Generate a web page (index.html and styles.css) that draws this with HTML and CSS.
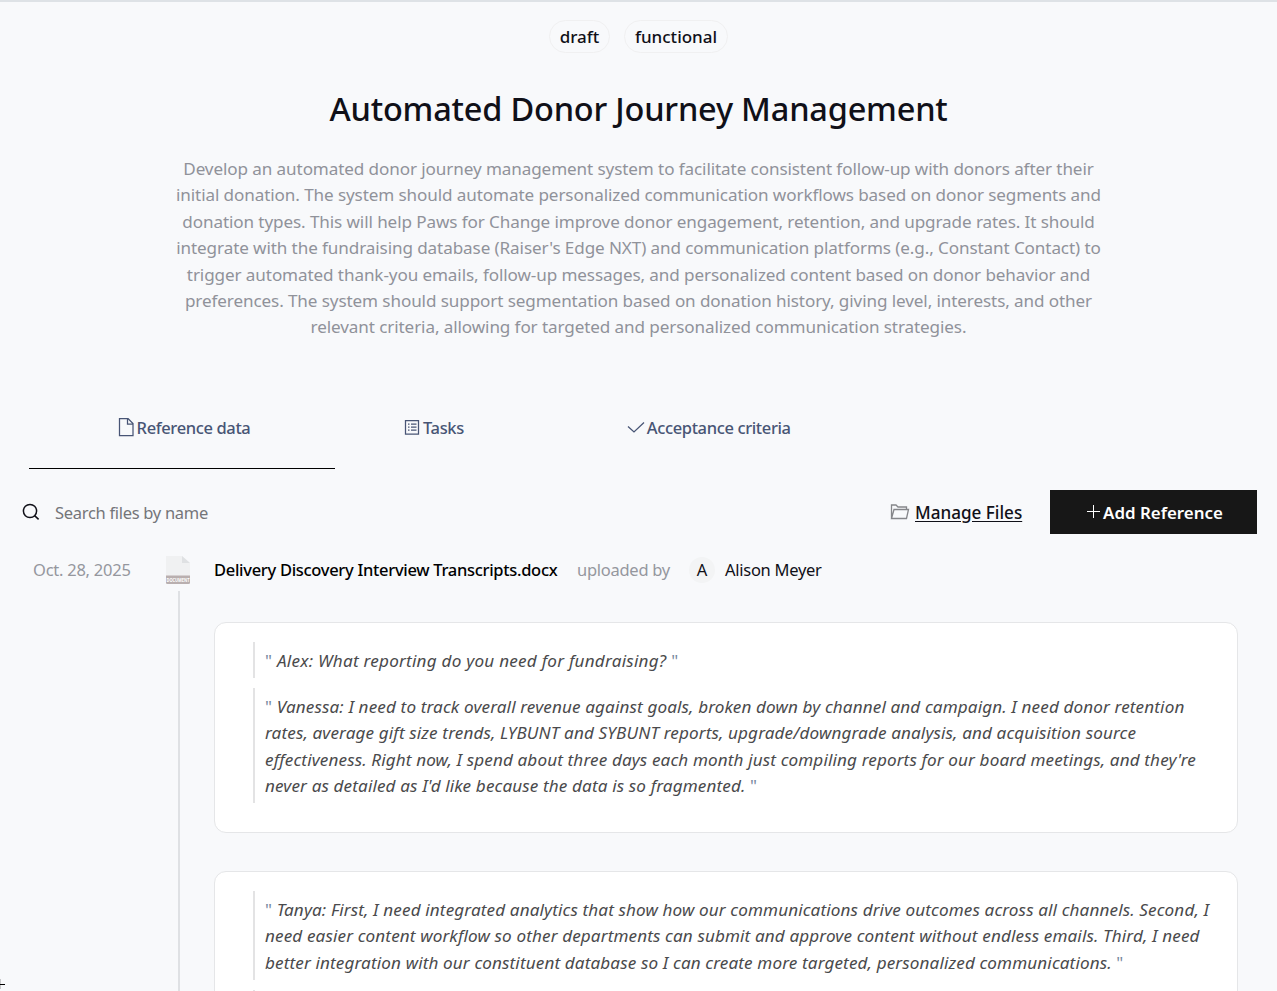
FILE: index.html
```html
<!DOCTYPE html>
<html lang="en">
<head>
<meta charset="utf-8">
<title>Automated Donor Journey Management</title>
<link rel="stylesheet" href="styles.css">
</head>
<body>
<main class="page">
  <header class="hero">
    <div class="tags"><span class="tag tag-draft">draft</span><span class="tag tag-functional">functional</span></div>
    <h1 class="title"><span>Automated Donor Journey Management</span></h1>
    <p class="summary">
      <span class="line">Develop an automated donor journey management system to facilitate consistent follow-up with donors after their</span>
      <span class="line">initial donation. The system should automate personalized communication workflows based on donor segments and</span>
      <span class="line">donation types. This will help Paws for Change improve donor engagement, retention, and upgrade rates. It should</span>
      <span class="line">integrate with the fundraising database (Raiser's Edge NXT) and communication platforms (e.g., Constant Contact) to</span>
      <span class="line">trigger automated thank-you emails, follow-up messages, and personalized content based on donor behavior and</span>
      <span class="line">preferences. The system should support segmentation based on donation history, giving level, interests, and other</span>
      <span class="line">relevant criteria, allowing for targeted and personalized communication strategies.</span>
    </p>
  </header>
  <nav class="tabs">
    <a class="tab tab-active"><svg class="icon-doc" width="16" height="20" viewBox="0 0 16 20"><path d="M1.500 .5h8.500l5 5v12H1.500zM9.500 .5v5.500h5.500" /></svg><span>Reference data</span></a>
    <a class="tab"><svg class="icon-list" width="16" height="18" viewBox="0 0 16 18"><path d="M1.500 1.500h13v13.500h-13zM4 5h1.500M7 5h5.500M4 8h1.500M7 8h5.500M4 11h1.500M7 11h5.500"/></svg><span>Tasks</span></a>
    <a class="tab"><svg class="icon-check" width="18" height="18" viewBox="0 0 18 18"><path d="M1 7.500l6 5.500L17 3.500"/></svg><span>Acceptance criteria</span></a>
  </nav>
  <section class="toolbar">
    <svg class="icon-search" width="18" height="18" viewBox="0 0 18 18"><circle cx="8" cy="8" r="6.600"/><path d="M12.600 12.600l4 3.800"/></svg>
    <span class="placeholder">Search files by name</span>
    <svg class="icon-folder" width="20" height="18" viewBox="0 0 20 18"><path d="M1.500 15.500V2h4.500l2 2h8.500v2.500M1.500 15.500L4 6.500h14.500L16.500 15.500z"/></svg>
    <a class="manage">Manage Files</a>
    <button class="add"><svg width="15" height="15" viewBox="0 0 15 15"><path d="M7.500 1v13M1 7.500h13"/></svg><span>Add Reference</span></button>
  </section>
  <section class="entry">
    <span class="date">Oct. 28, 2025</span>
    <div class="rail">
      <svg class="file" width="24" height="30" viewBox="0 0 24 30"><path class="sheet" d="M0 0h16l8 7v21H0z"/><path class="fold" d="M16 0l8 7h-8z"/><path class="band" d="M0 19.500h24v7q0 1.500-1.500 1.500h-21Q0 28 0 26.500z"/><text x="12" y="25.500" text-anchor="middle" textLength="23" lengthAdjust="spacingAndGlyphs">DOCUMENT</text></svg>
      <div class="rail-line"></div>
    </div>
    <div class="content">
      <div class="meta"><span class="filename">Delivery Discovery Interview Transcripts.docx</span><span class="by">uploaded by</span><span class="avatar">A</span><span class="person">Alison Meyer</span></div>
      <article class="card">
        <blockquote class="quote quote-single"><span class="line"><b class="mark">"</b> Alex: What reporting do you need for fundraising? <b class="mark">"</b></span></blockquote>
        <blockquote class="quote">
          <span class="line"><b class="mark">"</b> Vanessa: I need to track overall revenue against goals, broken down by channel and campaign. I need donor retention</span>
          <span class="line">rates, average gift size trends, LYBUNT and SYBUNT reports, upgrade/downgrade analysis, and acquisition source</span>
          <span class="line">effectiveness. Right now, I spend about three days each month just compiling reports for our board meetings, and they're</span>
          <span class="line">never as detailed as I'd like because the data is so fragmented. <b class="mark">"</b></span>
        </blockquote>
      </article>
      <article class="card">
        <blockquote class="quote">
          <span class="line"><b class="mark">"</b> Tanya: First, I need integrated analytics that show how our communications drive outcomes across all channels. Second, I</span>
          <span class="line">need easier content workflow so other departments can submit and approve content without endless emails. Third, I need</span>
          <span class="line">better integration with our constituent database so I can create more targeted, personalized communications. <b class="mark">"</b></span>
        </blockquote>
        <blockquote class="quote"></blockquote>
      </article>
    </div>
  </section>
  <svg class="cursor" width="5" height="12" viewBox="0 0 5 12"><path class="cursor-stem" d="M.5 1v10"/><path d="M0 6.500h5"/></svg>
</main>
</body>
</html>
```
FILE: styles.css
```css
* { box-sizing: border-box; }
body { margin: 0; background: #f8f9fb; font: 16.5px/26.4px "Noto Sans", sans-serif; color: #101018; }
.page { position: relative; height: 991px; overflow: hidden; border-top: 2px solid #dee2e6; }
svg { display: block; flex: none; fill: none; stroke: currentColor; }
.line { display: block; white-space: nowrap; }
.hero { display: flex; flex-direction: column; align-items: center; padding-top: 18px; }
.tags { display: flex; gap: 14px; }
.tag { height: 33px; border: 1px solid #f0f0f1; border-radius: 17px; display: flex; align-items: center; justify-content: center; padding-top: 1px; font-size: 17px; font-weight: 500; white-space: nowrap; }
.tag-draft { width: 61px; }
.tag-functional { width: 104px; }
.title { margin: 32px 0 0; font-size: 32.500px; line-height: 48px; font-weight: 500; letter-spacing: -0.2px; white-space: nowrap; }
.summary { margin: 23px 0 0; text-align: center; color: #90929a; font-size: 17.1px; letter-spacing: -0.1px; }
.tabs { display: flex; margin: 45px 0 0 29px; height: 83px; color: #485575; font-weight: 500; font-size: 16.5px; letter-spacing: -0.37px; }
.tab { width: 306px; display: flex; align-items: center; justify-content: center; gap: 3px; padding-top: 2px; white-space: nowrap; border-bottom: 1px solid transparent; }
.tab svg { stroke-width: 1.25; }
.tab-active { border-color: #000; padding-left: 4px; }
.tab + .tab { width: auto; margin-left: 69px; }
.tab + .tab + .tab { margin-left: 163px; gap: 2px; }
.toolbar { display: flex; align-items: center; height: 44px; margin-top: 21px; padding: 0 20px 0 22px; white-space: nowrap; }
.icon-search { stroke-width: 1.500; }
.placeholder { margin-left: 15px; padding-top: 2px; color: #747579; letter-spacing: -0.3px; }
.icon-folder { margin-left: auto; color: #85868a; stroke-width: 1.300; }
.manage { width: 107px; margin: 0 28px 0 5px; padding-top: 2px; font-size: 17.1px; font-weight: 500; text-decoration: underline; text-underline-offset: 2px; }
.add { width: 207px; height: 44px; padding: 0 0 0 2px; border: 0; background: #171717; color: #fff; display: flex; gap: 2px; align-items: center; justify-content: center; font: 600 16.9px "Noto Sans", sans-serif; }
.add span { padding-top: 1px; }
.entry { display: grid; grid-template-columns: 133px 24px 1024px; padding-left: 33px; margin-top: 22px; }
.date { color: #95979e; padding-top: 1px; white-space: nowrap; letter-spacing: -0.25px; }
.rail { display: flex; flex-direction: column; align-items: flex-start; width: 26px; height: 437px; }
.file { stroke: none; }
.sheet { fill: #f0f1f2; }
.fold { fill: #dfe1e3; }
.band { fill: #b9afaf; }
.file text { font: 700 5px "Noto Sans", sans-serif; fill: #fff; }
.rail-line { width: 2px; flex: 1; margin: 5px 0 0 12px; background: #dfe1e4; }
.content { margin-left: 24px; width: 1024px; }
.meta { display: flex; align-items: center; height: 28px; white-space: nowrap; letter-spacing: -0.27px; }
.filename { width: 363px; color: #000; font-weight: 500; letter-spacing: -0.3px; }
.by { width: 112px; color: #95979e; }
.avatar { width: 26px; height: 26px; border-radius: 50%; background: #f3f4f5; text-align: center; margin-right: 10px; }
.card { height: 211px; margin-top: 38px; padding: 19px 0 0 38px; background: #fff; border: 1px solid #e5e6e8; border-radius: 12px; }
.quote { margin: 0 0 10px; min-height: 36px; padding: 6px 0 4px 10px; border-left: 2px solid #e3e3e4; font-size: 17.1px; letter-spacing: 0.13px; font-style: italic; color: #4a4a4c; }
.quote-single { height: 36px; letter-spacing: 0.24px; }
.mark { font-weight: 400; font-style: normal; color: #7889a0; }
.cursor { position: absolute; left: 0; top: 976px; color: #000; }
.cursor-stem { stroke: #c8c9cb; }
```
